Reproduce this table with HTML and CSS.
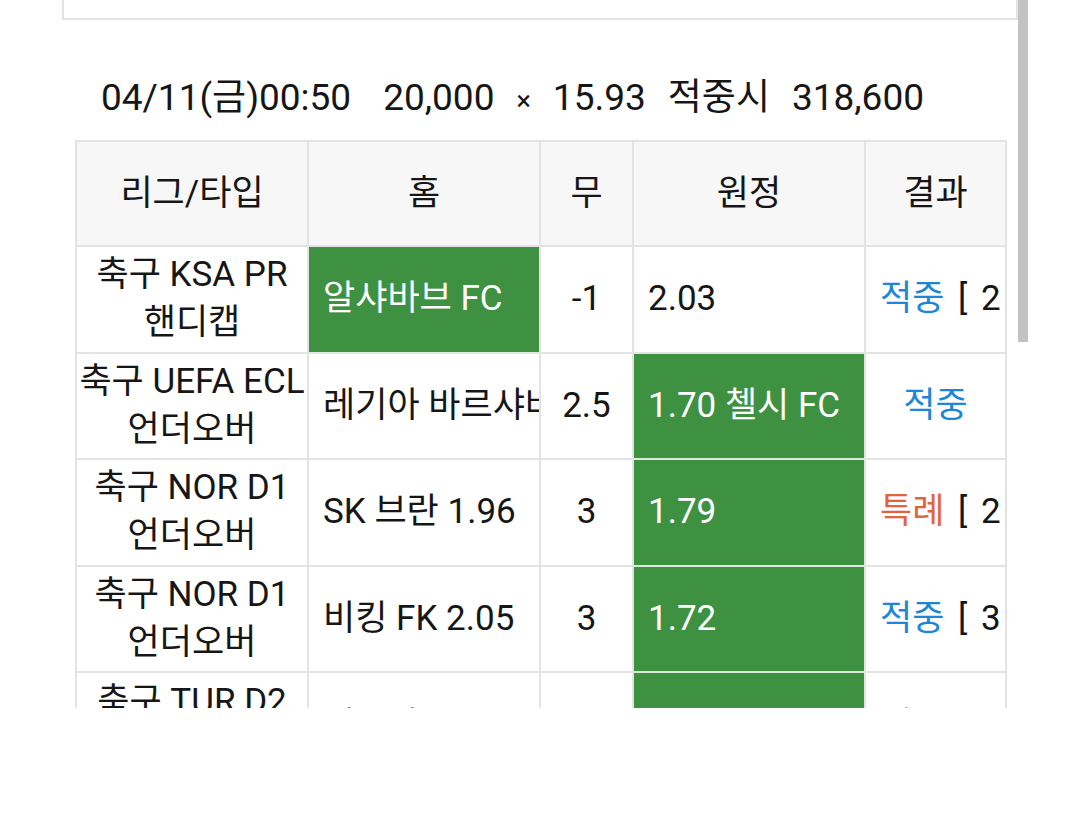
FILE: index.html
```html
<!DOCTYPE html>
<html lang="ko">
<head>
<meta charset="utf-8">
<title>베팅 내역</title>
<link rel="stylesheet" href="styles.css">
</head>
<body>
<div class="page">
  <div class="prev-box"></div>
  <div class="summary">
    <span class="date">04/11(금)00:50</span>
    <span class="stake">20,000</span>
    <span class="times">×</span>
    <span class="odds">15.93</span>
    <span class="label">적중시</span>
    <span class="payout">318,600</span>
  </div>
  <table class="bets">
    <colgroup>
      <col class="c-league">
      <col class="c-home">
      <col class="c-draw">
      <col class="c-away">
      <col class="c-result">
    </colgroup>
    <thead>
      <tr>
        <th>리그/타입</th>
        <th>홈</th>
        <th>무</th>
        <th>원정</th>
        <th>결과</th>
      </tr>
    </thead>
    <tbody>
      <tr>
        <td class="league">축구 KSA PR<br>핸디캡</td>
        <td class="team pick">알샤바브 FC</td>
        <td class="draw">-1</td>
        <td class="team">2.03</td>
        <td class="result"><span class="hit">적중</span> [ 2 : 0 ]</td>
      </tr>
      <tr>
        <td class="league">축구 UEFA ECL<br>언더오버</td>
        <td class="team">레기아 바르샤바</td>
        <td class="draw">2.5</td>
        <td class="team pick">1.70 첼시 FC</td>
        <td class="result"><span class="hit">적중</span></td>
      </tr>
      <tr>
        <td class="league">축구 NOR D1<br>언더오버</td>
        <td class="team">SK 브란 1.96</td>
        <td class="draw">3</td>
        <td class="team pick">1.79</td>
        <td class="result"><span class="special">특례</span> [ 2 : 1 ]</td>
      </tr>
      <tr>
        <td class="league">축구 NOR D1<br>언더오버</td>
        <td class="team">비킹 FK 2.05</td>
        <td class="draw">3</td>
        <td class="team pick">1.72</td>
        <td class="result"><span class="hit">적중</span> [ 3 : 1 ]</td>
      </tr>
      <tr>
        <td class="league">축구 TUR D2<br>언더오버</td>
        <td class="team">이스탄불스포르</td>
        <td class="draw">2.5</td>
        <td class="team pick">1.65</td>
        <td class="result"><span class="hit">적중</span> [ 1 : 2 ]</td>
      </tr>
    </tbody>
  </table>
  <div class="scrollbar"></div>
</div>
</body>
</html>
```
FILE: styles.css
```css
html, body {
  margin: 0;
  padding: 0;
  background: #ffffff;
}

body {
  font-family: Roboto, "Noto Sans CJK KR", sans-serif;
  color: #161616;
}

.page {
  position: relative;
  width: 1080px;
  height: 708px;
  overflow: hidden;
}

.prev-box {
  box-sizing: border-box;
  margin-left: 62px;
  width: 956px;
  height: 20px;
  border: 2px solid #e3e3e3;
  border-top: none;
}

.summary {
  display: flex;
  align-items: baseline;
  gap: 22px;
  padding-left: 101px;
  margin-top: 56px;
  height: 64px;
  font-size: 37px;
  line-height: 44px;
  color: #161616;
}

.summary .date {
  margin-right: 10px;
}

.summary .times {
  font-size: 27px;
}

.bets {
  margin-left: 75px;
  width: 930px;
  table-layout: fixed;
  border-collapse: collapse;
  font-size: 35px;
  line-height: 48px;
}

.c-league { width: 232px; }
.c-home { width: 232px; }
.c-draw { width: 93px; }
.c-away { width: 232px; }
.c-result { width: 141px; }

.bets th,
.bets td {
  border: 2px solid #e3e3e3;
  padding: 0 14px;
  white-space: nowrap;
  overflow: hidden;
  vertical-align: middle;
}

.bets th {
  height: 103px;
  background: #f7f7f7;
  font-weight: 400;
  text-align: center;
  color: #161616;
}

.bets td {
  height: 104.6px;
  text-align: center;
}

.bets td.league {
  padding: 0 2px;
}

.bets td.team {
  text-align: left;
}

.bets td.pick {
  background: #3f9142;
  color: #ffffff;
  border-color: #e3e3e3 #e3e3e3 #dcecdc #e3e3e3;
}

.bets td.result {
  text-align: center;
  word-spacing: 5px;
}

.hit {
  color: #1b87d6;
}

.special {
  color: #e2643c;
}

.scrollbar {
  position: absolute;
  top: 0;
  left: 1018px;
  width: 10px;
  height: 342px;
  background: #c2c2c2;
}
```
